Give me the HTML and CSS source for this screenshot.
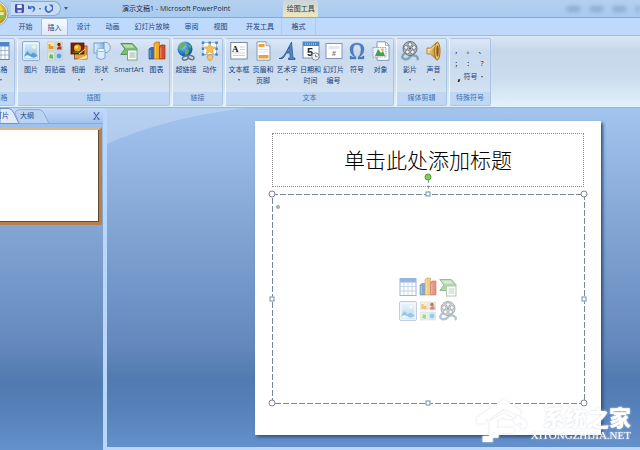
FILE: index.html
```html
<!DOCTYPE html>
<html lang="zh-CN">
<head>
<meta charset="utf-8">
<title>演示文稿1 - Microsoft PowerPoint</title>
<link rel="stylesheet" href="styles.css">
</head>
<body>
<svg class="defs" aria-hidden="true">
  <defs>
    <linearGradient id="gold" x1="0" x2="1"><stop offset="0" stop-color="#fbe7a2"/><stop offset="1" stop-color="#b87a16"/></linearGradient>
    <linearGradient id="sky" x2="0" y2="1"><stop offset="0" stop-color="#d5ecfb"/><stop offset="1" stop-color="#8fc0e4"/></linearGradient>
    <linearGradient id="blue" x1="0" x2="1"><stop offset="0" stop-color="#e8f3fd"/><stop offset="1" stop-color="#7fb0de"/></linearGradient>
    <radialGradient id="globe" cx=".35" cy=".3" r=".8"><stop offset="0" stop-color="#a9dcf8"/><stop offset=".5" stop-color="#2f86cf"/><stop offset="1" stop-color="#12458c"/></radialGradient>
    <radialGradient id="orb" cx=".4" cy=".4" r=".6"><stop offset="0" stop-color="#fff6b8"/><stop offset=".6" stop-color="#f5d33c"/><stop offset="1" stop-color="#b98d22"/></radialGradient>
  </defs>
  <symbol id="i-table" viewBox="0 0 18 20"><rect x="1" y="1.500" width="16" height="17" fill="#fff" stroke="#5d86bd"/><rect x="1" y="1.500" width="16" height="4" fill="#4c87d0"/><path d="M1 9.500h16M1 14h16M5 5v13M9 5v13M13 5v13" stroke="#8ea9cc" stroke-width=".8"/></symbol>
  <symbol id="i-picture" viewBox="0 0 18 20"><rect x=".7" y=".7" width="16.600" height="18.600" rx=".6" fill="#fff" stroke="#7d9cc6"/><rect x="2.500" y="2.500" width="13" height="15" fill="url(#sky)"/><circle cx="12" cy="6" r="1.800" fill="#fff7c9"/><path d="M2.500 14l3-4 3 3.500 3-2 4 3v3h-13z" fill="#5a9fd2"/><path d="M2.500 15.500q3-2.500 6 0t7-.5v2.500h-13z" fill="#e3f1fa"/></symbol>
  <symbol id="i-clip" viewBox="0 0 18 20"><g stroke="#c3c9cf" stroke-width=".7"><rect x="1.500" y="1" width="6.800" height="8" fill="#fbe8b6"/><rect x="9.800" y="1" width="6.800" height="8" fill="#f4cfae"/><rect x="1.500" y="11" width="6.800" height="8" fill="#d8efd0"/><rect x="9.800" y="11" width="6.800" height="8" fill="#bfe0f8"/></g><path d="M2.500 3h2v2h3v3h-5z" fill="#e39a26"/><circle cx="13" cy="3.500" r="1.700" fill="#5a2e1e"/><path d="M11 8.500q0-4 4.500-3v3z" fill="#9f3f32"/><path d="M3 17l1-4 3 1v4z" fill="#6cba60"/><circle cx="13" cy="15" r="2.400" fill="#58a4de"/></symbol>
  <symbol id="i-album" viewBox="0 0 18 20"><rect x="4.500" y="5" width="12.500" height="13" fill="#eaa03a" stroke="#8c4a1c" stroke-width=".8"/><path d="M6 19l11-5v3.500z" fill="#f8e2a0"/><rect x="1" y="2" width="13" height="11" fill="#7c1f10" stroke="#55160c" stroke-width=".8"/><circle cx="7.500" cy="7" r="3.500" fill="#e8a81f"/><circle cx="6.500" cy="6" r="1.600" fill="#ffe95e"/><path d="M2 12q4-4 11 0z" fill="#4c7a21"/><path d="M9 13l6-5" stroke="#f5e7c7"/></symbol>
  <symbol id="i-shapes" viewBox="0 0 18 20"><circle cx="12" cy="6.500" r="5.300" fill="#d4e7f8" stroke="#7aa4d0"/><rect x="1" y="2" width="10" height="10" fill="url(#blue)" stroke="#6e9bca"/><path d="M4 9v8q4 3 8 0V9z" fill="#dcebf8" stroke="#7aa4d0"/><ellipse cx="8" cy="9" rx="4" ry="1.500" fill="#fff" stroke="#7aa4d0" stroke-width=".8"/></symbol>
  <symbol id="i-smart" viewBox="0 0 18 20"><path d="M.8 2.500h11.500l5 5.500-5 5.500H.8L5 8z" fill="#7fbd76" stroke="#4b9350"/><path d="M2.500 3.500h9l3 3.200H5.500z" fill="#b9e0ab"/><rect x="7.500" y="9" width="9.500" height="10" fill="#fff" stroke="#79a482"/><path d="M9.500 12h6M9.500 14h6M9.500 16h6" stroke="#7fa98a" stroke-width=".9"/></symbol>
  <symbol id="i-chart" viewBox="0 0 18 20"><path d="M1 8l2-1.500h3V18H1z" fill="#2f72b8" stroke="#1f5591" stroke-width=".7"/><path d="M6 2.500L8 1h3.500v17H6z" fill="#efaa28" stroke="#b5711a" stroke-width=".7"/><path d="M11.500 5.500L13 4h4v14h-5.500z" fill="#d8502b" stroke="#9c3118" stroke-width=".7"/><path d="M2.200 9v8M7.300 3.500V17M12.800 6.500V17" stroke="#ffffff66"/></symbol>
  <symbol id="i-link" viewBox="0 0 18 20"><circle cx="8" cy="8" r="7.500" fill="url(#globe)"/><path d="M3 3q4-2 6 0l-2 3-3 2-3-1zM8 8l4 1-1 4-3 1zM11 3l3 2-1 3z" fill="#68b451"/><g fill="none" stroke="#66788c" stroke-width="1.500"><ellipse cx="8.500" cy="17" rx="3.200" ry="1.900" transform="rotate(-20 8.500 17)"/><ellipse cx="14" cy="16.500" rx="3.200" ry="1.900" transform="rotate(20 14 16.500)"/></g></symbol>
  <symbol id="i-action" viewBox="0 0 18 20"><rect x="2" y="1.500" width="13.500" height="12" fill="#f5f9fd" stroke="#7aa5ce" stroke-width=".7"/><g fill="#4384be"><path d="M.8.5h2.500v2.500H.8zM7.500.5H10v2.500H7.500zM14.300.5h2.500v2.500h-2.500zM.8 6.500h2.500V9H.8zM14.300 6.500h2.500V9h-2.500zM.8 12.300h2.500v2.500H.8zM14.300 12.300h2.500v2.500h-2.500z"/></g><path d="M8.800 2l1.700 3.800 4 .4-3 2.700 1 4-3.700-2.200-3.600 2.200 1-4-3-2.700 4-.4z" fill="#f8bd50" stroke="#e09a2c" stroke-width=".6"/><path d="M6 15q3-3 6 0-.2 3-2 4.300H8Q6.200 18 6 15z" fill="#f3c474" stroke="#c9913f" stroke-width=".7"/></symbol>
  <symbol id="i-header" viewBox="0 0 18 20"><path d="M3 .8h9l4 4v14.400H3z" fill="#fff" stroke="#8797ad"/><path d="M12 .8v4h4" fill="#dce6f2" stroke="#8797ad" stroke-width=".8"/><path d="M4.500 3h6v3h-6zM4.500 14h10v3.500h-10z" fill="#f1a13c"/><path d="M4.500 8.500h10M4.500 11h10" stroke="#dbe1e9"/></symbol>
  <symbol id="i-art" viewBox="0 0 18 20"><path d="M1 17.500q4 0 8-8L13.500 1 15 17h2v1.500h-6.500V17h1.700l-.3-5H8.500L6 16q-1 2.500-5 1.500zm8.500-7h2.300L11.500 6z" fill="#5088ca" stroke="#2b5797" stroke-width=".8"/></symbol>
  <symbol id="i-symbol" viewBox="0 0 18 20"><path d="M2 18v-3h1.200q.3 1 1.300 1h2.200Q2 13 2 8.500 2 2 9 2t7 6.500q0 4.500-4.700 7.500h2.200q1 0 1.300-1H16v3h-6v-2q3-2.500 3-7.300Q13 3.500 9 3.500T5 8.700Q5 13.500 8 16v2z" fill="#4b82c5" stroke="#2d5c9c" stroke-width=".3"/></symbol>
  <symbol id="i-object" viewBox="0 0 18 20"><path d="M5 .8h8.500l3.500 3.500v15H5z" fill="#fff" stroke="#8797ad"/><path d="M13.500.8v3.500H17" fill="none" stroke="#8797ad" stroke-width=".8"/><rect x="1" y="6.500" width="13" height="9.500" fill="#eaf4fb" stroke="#7f93a9" stroke-width=".8" stroke-dasharray="1.500 .8"/><path d="M3 15l3-7 3 4 2-2 2 5z" fill="#4d9c55"/><circle cx="10.500" cy="8.800" r="1.300" fill="#f1b13b"/></symbol>
  <symbol id="i-film" viewBox="0 0 18 20"><path d="M4 12q-5 4-1 6 4 1 6-2t6-1q3 2 1 4" fill="none" stroke="#7fa5bb" stroke-width="2.400"/><circle cx="9" cy="7.500" r="7" fill="#aeb6bf" stroke="#69727d"/><g fill="#f4f7fa" stroke="#5f6973" stroke-width=".7"><circle cx="9" cy="3.500" r="1.900"/><circle cx="5" cy="6.500" r="1.900"/><circle cx="13" cy="6.500" r="1.900"/><circle cx="6.500" cy="11" r="1.900"/><circle cx="11.500" cy="11" r="1.900"/></g><circle cx="9" cy="7.500" r=".9" fill="#434b55"/></symbol>
  <symbol id="i-sound" viewBox="0 0 18 20"><path d="M2 7h3.500L12 1v18l-6.500-6H2z" fill="url(#gold)" stroke="#a9711b" stroke-width=".8"/><ellipse cx="12.300" cy="10" rx="2.700" ry="9" fill="#eec26a" stroke="#a66c17"/><ellipse cx="12.500" cy="10" rx="1.200" ry="5.500" fill="#8d5813"/><path d="M3 8.500h3l4-4" stroke="#fff2c3" fill="none"/></symbol>
</svg>

<div class="app">
  <header class="titlebar">
    <div class="quick">
      <button class="tool" aria-label="保存"><svg viewBox="0 0 9 9"><path d="M.7.7h7.600v7.600H.7z" fill="#4e59b8" stroke="#313a8d"/><path d="M2.200.7h4.600v3.300H2.200z" fill="#eef2fb"/><path d="M2.500 6h4v2.500h-4z" fill="#cfd6ee"/></svg></button>
      <button class="tool" aria-label="撤消"><svg viewBox="0 0 9 9"><path d="M1 1v4h4L3.500 3.700Q7 3 6.500 5.500 6 7.500 4.500 8.500 8.500 7 8.300 4.200 7.500 1 2.500 2.500z" fill="#3c68c8"/></svg></button>
      <i class="caret"></i>
      <button class="tool" aria-label="重复"><svg viewBox="0 0 9 9"><path d="M2.500 2Q.5 4.500 2.500 7t5-.5.300-4" fill="none" stroke="#3c68c8" stroke-width="1.700"/><path d="M5 .5h3.700v3.500z" fill="#3c68c8"/></svg></button>
    </div>
    <i class="caret more"></i>
    <h1>演示文稿1 - Microsoft PowerPoint</h1>
    <span class="context">绘图工具</span>
    <span class="haze"><i></i><i></i><i></i><i></i></span>
  </header>
  <svg class="orb" viewBox="0 0 28 28" aria-hidden="true"><circle cx="13" cy="13" r="13" fill="#e9eef5" stroke="#8ba3c4"/><circle cx="13" cy="13" r="11.500" fill="url(#orb)"/><path d="M7 8h5v5H7z" fill="#e6602c"/><path d="M16 10h7v9h-7z" fill="#98b93a"/><path d="M17.500 11.500h4v3h-4z" fill="#e5eda8"/></svg>

  <nav class="tabs">
    <button>开始</button>
    <button class="on">插入</button>
    <button>设计</button>
    <button>动画</button>
    <button class="wide">幻灯片放映</button>
    <button>审阅</button>
    <button>视图</button>
    <button class="wide">开发工具</button>
    <button class="ctx">格式</button>
  </nav>

  <section class="ribbon">
    <div class="group cut"><div class="items">
      <button class="b"><svg><use href="#i-table"/></svg><span>表格</span><i class="caret"></i></button>
    </div><h2>表格</h2></div>
    <div class="group"><div class="items">
      <button class="b wide"><svg><use href="#i-picture"/></svg><span>图片</span></button>
      <button class="b wide"><svg><use href="#i-clip"/></svg><span>剪贴画</span></button>
      <button class="b"><svg><use href="#i-album"/></svg><span>相册</span><i class="caret"></i></button>
      <button class="b"><svg><use href="#i-shapes"/></svg><span>形状</span><i class="caret"></i></button>
      <button class="b xwide"><svg><use href="#i-smart"/></svg><span>SmartArt</span></button>
      <button class="b"><svg><use href="#i-chart"/></svg><span>图表</span></button>
    </div><h2>插图</h2></div>
    <div class="group"><div class="items">
      <button class="b wide"><svg><use href="#i-link"/></svg><span>超链接</span></button>
      <button class="b"><svg><use href="#i-action"/></svg><span>动作</span></button>
    </div><h2>链接</h2></div>
    <div class="group"><div class="items">
      <button class="b wide"><svg viewBox="0 0 18 20"><rect x=".8" y="1.500" width="16.400" height="16.500" fill="#fff" stroke="#7b8ba1"/><path d="M10 6h5M10 8.500h5M3 12h12M3 14.500h12" stroke="#b9c6d6" stroke-width=".8"/><text x="2" y="11" class="glyph-a">A</text></svg><span>文本框</span><i class="caret"></i></button>
      <button class="b wide"><svg><use href="#i-header"/></svg><span>页眉和<br>页脚</span></button>
      <button class="b wide"><svg><use href="#i-art"/></svg><span>艺术字</span><i class="caret"></i></button>
      <button class="b"><svg viewBox="0 0 18 20"><rect x="1" y="1" width="16" height="16" fill="#fff" stroke="#6f8eb8"/><path d="M1 1h16v4H1z" fill="#4f86cb"/><path d="M3 3h12" stroke="#cfe0f6" stroke-dasharray="1 1"/><text x="5" y="15" class="glyph-five">5</text><circle cx="13.500" cy="15.500" r="3.700" fill="#eef4fa" stroke="#7f8b9a"/><path d="M13.500 13.500v2.200h2" stroke="#596473" fill="none" stroke-width=".8"/></svg><span>日期和<br>时间</span></button>
      <button class="b"><svg viewBox="0 0 18 20"><rect x="1" y="2.500" width="16" height="15" fill="#fff" stroke="#8495ad"/><rect x="3.500" y="5" width="11" height="3" fill="#e1e8f1"/><text x="7" y="15" class="glyph-hash">#</text></svg><span>幻灯片<br>编号</span></button>
      <button class="b wide"><svg><use href="#i-symbol"/></svg><span>符号</span></button>
      <button class="b"><svg><use href="#i-object"/></svg><span>对象</span></button>
    </div><h2>文本</h2></div>
    <div class="group"><div class="items">
      <button class="b wide"><svg><use href="#i-film"/></svg><span>影片</span><i class="caret"></i></button>
      <button class="b"><svg><use href="#i-sound"/></svg><span>声音</span><i class="caret"></i></button>
    </div><h2>媒体剪辑</h2></div>
    <div class="group"><div class="marks">
      <button>，</button><button>。</button><button>、</button>
      <button>；</button><button>：</button><button>?</button>
      <button class="more-marks"><b>,</b> 符号 <i class="caret"></i></button>
    </div><h2>特殊符号</h2></div>
  </section>

  <main class="work">
    <aside class="outline">
      <div class="panetabs">
        <button class="cur">幻灯片</button>
        <button class="alt">大纲</button>
        <svg viewBox="0 0 50 16" preserveAspectRatio="none" aria-hidden="true"><path d="M0 .5h9q3 0 5 5l5 10H0z" fill="#dfebfa" stroke="#6e93c9"/><path d="M15 5Q16 1.500 19 1.500h20q3 0 5 4l5 10H19.500z" fill="#b9d3f5" stroke="#8eabd6"/></svg>
        <button class="close" aria-label="关闭"><svg viewBox="0 0 7 8"><path d="M.5.800h1.500M5 .800h1.500M1.200.8l4.600 6.400M5.800.8L1.200 7.200M.3 7.200h2M4.700 7.200h2" stroke="#3a5da5" stroke-width="1.100"/></svg></button>
      </div>
      <div class="thumb"></div>
    </aside>
    <section class="canvas">
      <svg class="sweep" viewBox="0 0 140 36" aria-hidden="true"><path d="M0 0h138Q58 10 0 36z" fill="#fff" fill-opacity=".22"/></svg>
      <article class="slide">
        <h3 class="title">单击此处添加标题</h3>
        <div class="body">
          <svg class="dashes" aria-hidden="true"><rect x="0" y="0" width="100%" height="100%"/></svg>
          <i class="stem"></i><i class="spin"></i>
          <i class="h nw"></i><i class="h n"></i><i class="h ne"></i><i class="h w"></i><i class="h e"></i><i class="h sw"></i><i class="h s"></i><i class="h se"></i>
          <i class="bullet"></i>
          <div class="inserts">
            <button aria-label="插入表格"><svg><use href="#i-table"/></svg></button>
            <button aria-label="插入图表"><svg><use href="#i-chart"/></svg></button>
            <button aria-label="插入 SmartArt"><svg><use href="#i-smart"/></svg></button>
            <button aria-label="插入图片"><svg><use href="#i-picture"/></svg></button>
            <button aria-label="剪贴画"><svg><use href="#i-clip"/></svg></button>
            <button aria-label="插入影片"><svg><use href="#i-film"/></svg></button>
          </div>
        </div>
      </article>
      <div class="mark">
        <svg viewBox="0 0 64 50" aria-hidden="true"><path d="M2 22L34 1l20 12v7L34 12 16 24h-3v5H2zM17 27l17-10 12 7h-9l-4-2-7 4v8h20v7H28v5h-7v5H9v-7h8zM45 25l6-5 10 7v5l-5 4-3-3 3-3-3-2-5 3z" fill="#fff"/></svg>
        <div><strong>系统之家</strong><em>XITONGZHIJIA.NET</em></div>
      </div>
    </section>
  </main>
</div>
</body>
</html>
```
FILE: styles.css
```css
* { box-sizing: border-box; }
body { margin: 0; font: 7px/11px "Open Sans", "Noto Sans CJK SC", sans-serif; color: #23427c; }
button { appearance: none; border: 0; padding: 0; margin: 0; background: none; font: inherit; color: inherit; white-space: nowrap; }
h1, h2, h3 { margin: 0; font: inherit; }
.defs { position: absolute; width: 0; height: 0; }
.app { position: relative; min-height: 100vh; display: flex; flex-direction: column; overflow: hidden; background: #bad6fa; }

.titlebar { display: flex; align-items: center; height: 18px; padding-left: 11px; background: linear-gradient(#b4d0ee, #a9cbee); border-bottom: 1px solid #8ba8cb; }
.quick { display: flex; align-items: center; gap: 3px; height: 15px; padding: 0 7px 0 4px; border: 1px solid #8caad2; border-left: 0; border-radius: 0 8px 8px 0; background: #c8dcf4; width: 50px; }
.tool { width: 9px; height: 9px; flex: none; }
.tool svg { display: block; width: 9px; height: 9px; }
.caret { display: block; width: 0; border: 1px solid transparent; border-top: 2px solid #3f5e94; border-bottom: 0; }
.more { margin-left: 3px; border-width: 3px 2px 0; }
h1 { margin-left: 54px; color: #1c2b48; }
.context { margin-left: 53px; width: 35px; height: 17px; line-height: 18px; text-align: center; color: #2f3546; background: linear-gradient(#c9d4da, #f0e8b8); }
.haze { display: flex; gap: 10px; margin-left: auto; filter: blur(2px); opacity: .4; }
.haze i { width: 13px; height: 6px; background: #5b7c9f; }
.haze i:last-child { width: 4px; }
.orb { position: absolute; left: -17px; top: 1px; width: 27px; height: 27px; }

.tabs { display: flex; height: 17px; padding-left: 12px; gap: 2px; background: linear-gradient(#bdd9fd, #c0d9fa); }
.tabs button { width: 27px; height: 17px; line-height: 17px; text-align: center; }
.tabs .wide { width: 48px; }
.tabs .wide + .ctx { width: 35px; margin-left: -5px; border: 1px solid #b3cbea; border-width: 0 1px; }
.tabs .on { border: 1px solid #a3bfe6; border-bottom: 0; border-radius: 2px 2px 0 0; background: linear-gradient(#f6fafe, #dfe9f5); line-height: 15px; }

.ribbon { display: flex; gap: 2px; height: 73px; padding: 2px 0 1px; border-top: 1px solid #9dbbe2; border-bottom: 1px solid #8fb8d8; background: linear-gradient(#dbe6f4, #c6d7ec 20%, #ccdcee 60%, #e0f3fc); }
.group { display: flex; flex-direction: column; flex: none; padding: 0; border: 1px solid #a9c5e3; border-left-color: #eef5fc; border-radius: 2px; background: linear-gradient(#dde8f5, #cadaee 20%, #cfdff0 70%, #dbe9f7); }
.cut { margin-left: -14px; width: 29px; align-items: center; }
.cut h2 { align-self: stretch; }
.items { display: flex; flex: 1; padding: 2px 1px 0; }
.b { display: flex; flex-direction: column; align-items: center; width: 23px; text-align: center; }
.b svg { width: 18px; height: 20px; flex: none; margin-bottom: 3px; }
.b .caret { margin-top: 4px; }
.wide { width: 24px; }
.xwide { width: 32px; }
.group h2 { height: 13px; line-height: 12px; text-align: center; color: #4270b2; background: #bfd7f2; }
.marks { flex: 1; display: grid; grid-template-columns: repeat(3, 12px); grid-auto-rows: 13px; padding: 5px 2px 0; color: #111c33; }
.marks .more-marks { grid-column: 1 / 4; display: flex; align-items: center; justify-content: center; gap: 3px; color: #23427c; }
.marks b { color: #000; font-size: 11px; }
.glyph-a { font: bold 9px "Liberation Serif", serif; fill: #111; }
.glyph-five { font: bold 11px "Liberation Sans", sans-serif; fill: #222; }
.glyph-hash { font: bold 7px "Liberation Sans", sans-serif; fill: #68778c; }

.work { flex: 1; display: grid; grid-template-columns: 103px 1fr; column-gap: 4px; background: #b9d6fb; }
.outline, .canvas { background: linear-gradient(#a3c4ef, #96b7e3 15%, #85a7d5 33%, #6388bd 70%, #517bb0 80%, #5580b9 88%, #6490cb); }
.panetabs { position: relative; display: flex; height: 16px; line-height: 16px; background: linear-gradient(#c5dcf8, #a0c2ee); border-bottom: 1px solid #86a9d9; }
.panetabs > svg { position: absolute; left: 0; top: 0; width: 50px; height: 16px; }
.panetabs button { position: relative; z-index: 1; }
.cur { margin-left: -12px; width: 21px; }
.alt { margin-left: 11px; }
.panetabs .close { margin: 4px 3px 4px auto; width: 7px; height: 8px; }
.close svg { display: block; width: 7px; height: 8px; }
.thumb { height: 98px; margin: 3px 1px 0 0; background: #fff; border: 3px solid #b9804c; border-top-color: #d9b78f; border-left: 0; box-shadow: inset -1px -1px #5e4a2c; }
.canvas { position: relative; display: flex; margin-bottom: 3px; }
.sweep { position: absolute; left: 0; top: 0; width: 140px; height: 36px; }
.slide { position: relative; flex: 1; display: flex; flex-direction: column; gap: 7px; margin: 13px 39px 12px 148px; padding: 12px 17px 32px; background: #fff; box-shadow: 2px 2px 3px #2f4f7c; }
.title { height: 54px; border: 1px dotted #8b8b8b; font: 300 21px/50px "Noto Sans CJK SC", sans-serif; text-align: center; color: #000; }
.body { position: relative; flex: 1; display: grid; place-items: center; }
.dashes { position: absolute; inset: 0; width: 100%; height: 100%; overflow: visible; }
.dashes rect { fill: none; stroke: #7488a0; stroke-width: 1px; stroke-dasharray: 6 2; shape-rendering: crispEdges; }
.h { position: absolute; width: 5px; height: 5px; background: #fff; border: 1px solid #6f91ac; transform: translate(-50%, -50%); }
.nw, .ne, .sw, .se { width: 7px; height: 7px; border-radius: 50%; border-color: #7b8793; }
.nw, .n, .ne { top: 0; }
.w, .e { top: 50%; }
.sw, .s, .se { top: 100%; }
.nw, .w, .sw { left: 0; }
.n, .s { left: 50%; }
.ne, .e, .se { left: 100%; }
.stem { position: absolute; left: 50%; top: -14px; height: 14px; border-left: 1px dashed #7b98ad; }
.spin { position: absolute; left: 50%; top: -17px; width: 7px; height: 7px; border-radius: 50%; background: #83cf54; border: 1px solid #4f9a36; transform: translate(-50%, -50%); }
.bullet { position: absolute; left: 4px; top: 11px; width: 4px; height: 4px; border-radius: 50%; background: #a7abb0; }
.inserts { display: grid; grid-template-columns: repeat(3, 18px); gap: 4px 2px; opacity: .6; }
.inserts button, .inserts svg { display: block; width: 18px; height: 20px; }
.mark { position: absolute; right: 9px; bottom: 5px; display: flex; align-items: flex-end; gap: 2px; color: #fff; filter: drop-shadow(0 0 1px #d5dce6); }
.mark svg { width: 54px; height: 44px; }
.mark div { display: flex; flex-direction: column; align-items: flex-end; }
.mark strong { font: 900 22px/26px "Noto Sans CJK SC", sans-serif; }
.mark em { font: 11px/13px "Liberation Serif", serif; }
```
